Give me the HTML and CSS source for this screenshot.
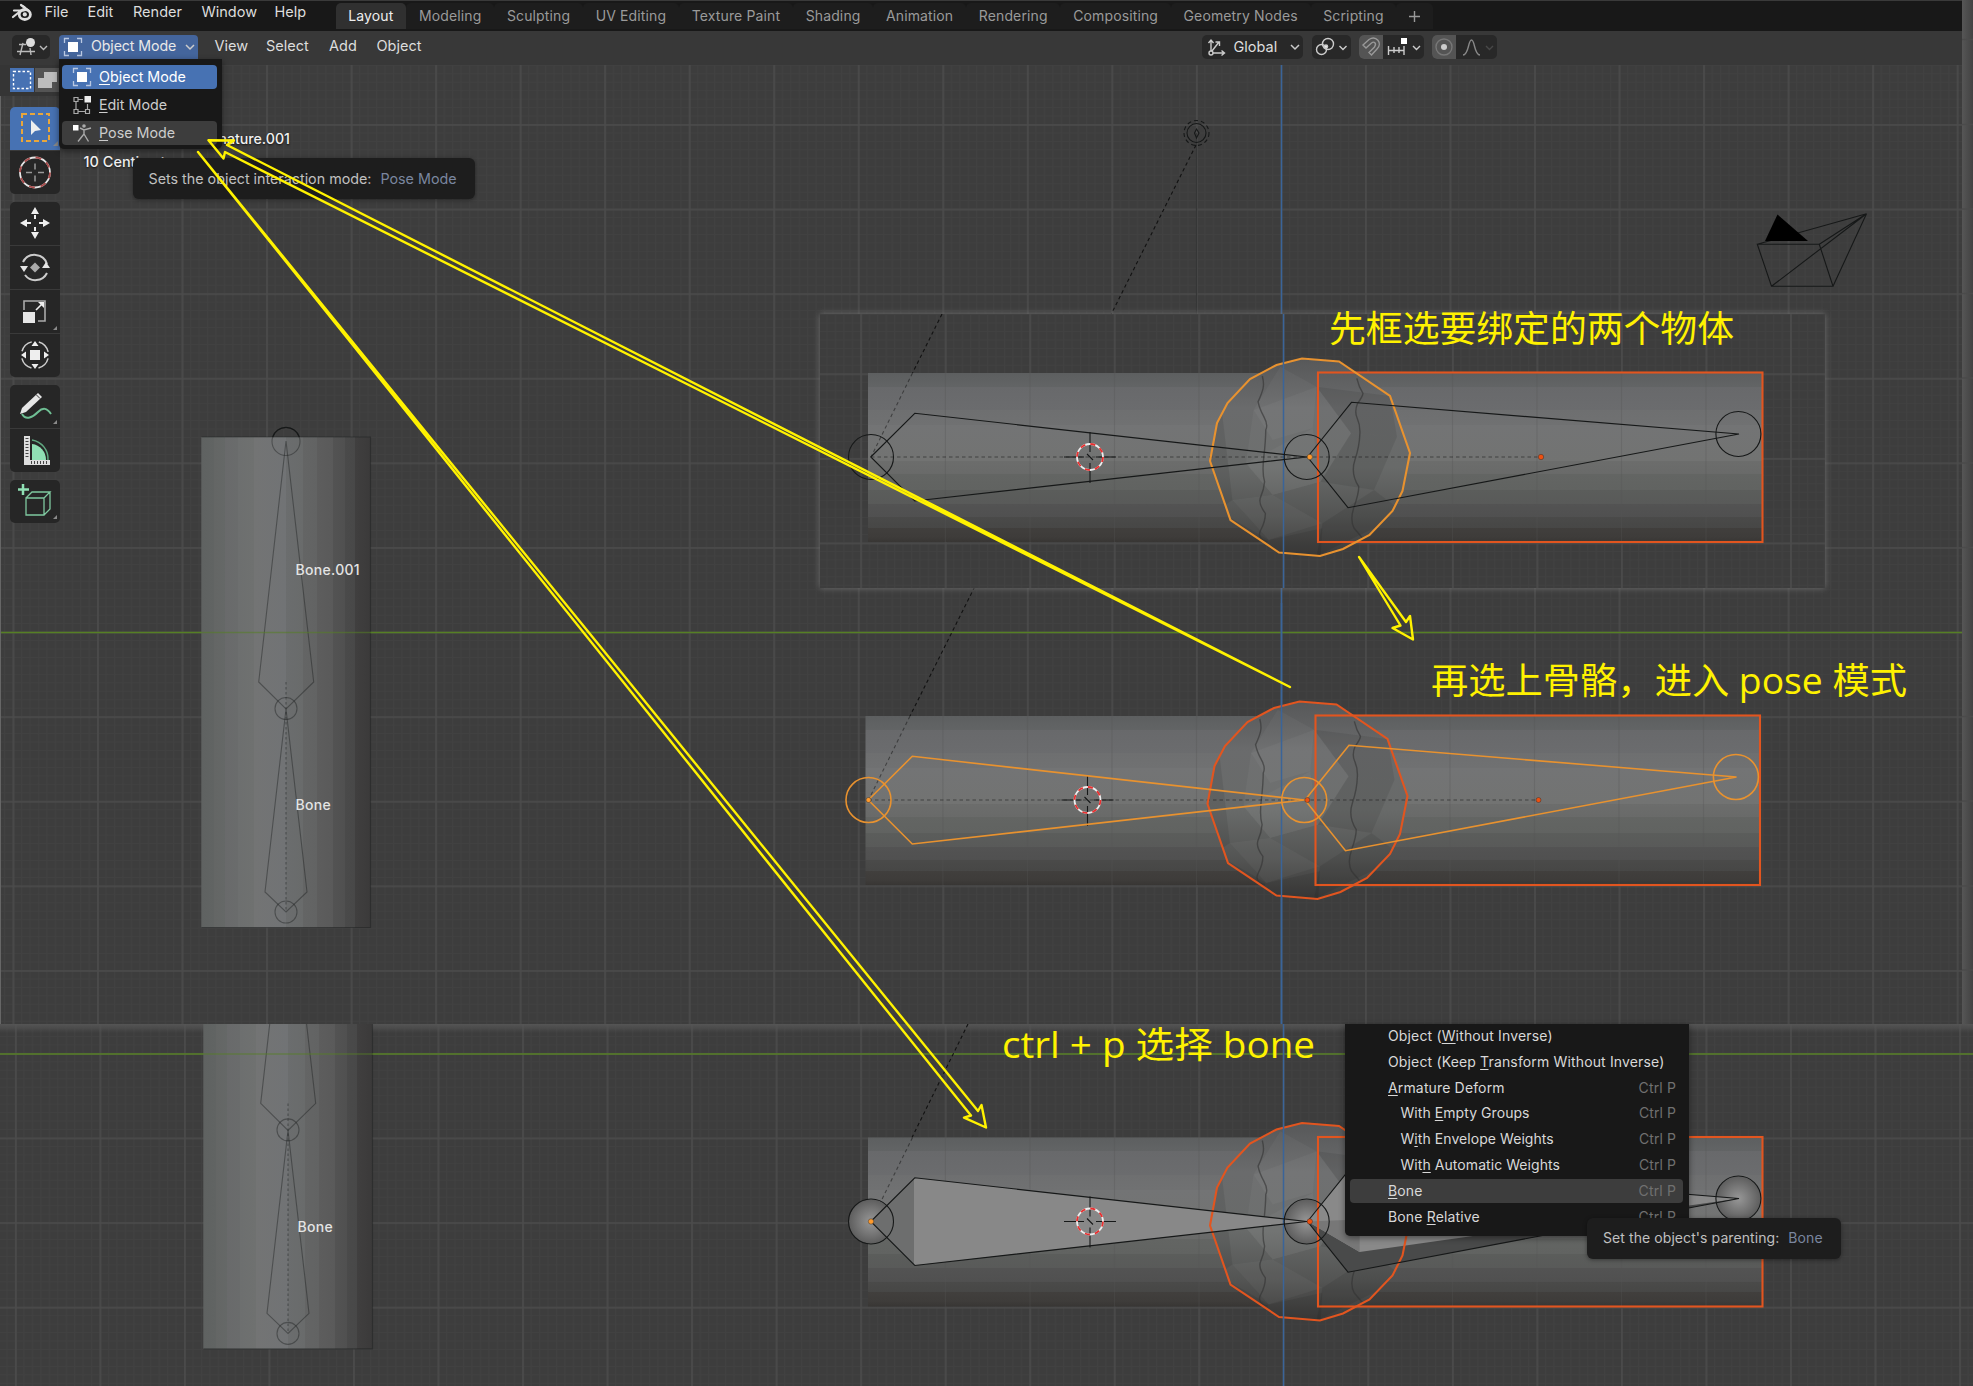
FILE: index.html
```html
<!DOCTYPE html>
<html lang="zh-CN">
<head>
<meta charset="utf-8">
<title>Blender</title>
<link rel="stylesheet" href="styles.css">
</head>
<body>
<div class="app">
<svg class="scene" width="1973" height="1386" viewBox="0 0 1973 1386">
  <defs>
    <pattern id="minor" width="8.453" height="8.46" patternUnits="userSpaceOnUse"><path class="grid-minor" d="M0 .5H8.5M.5 0V8.5"/></pattern>
    <pattern id="major" width="84.53" height="84.6" patternUnits="userSpaceOnUse"><path class="grid-major" d="M0 1H84.6M1 0V84.6"/></pattern>
    <linearGradient id="tube" x1="0" y1="0" x2="0" y2="1">
      <stop offset="0" stop-color="#5d5f60"/><stop offset=".08" stop-color="#626465"/><stop offset=".08" stop-color="#68696b"/><stop offset=".22" stop-color="#6b6c6e"/><stop offset=".22" stop-color="#6e6f70"/><stop offset=".31" stop-color="#707172"/><stop offset=".31" stop-color="#737475"/><stop offset=".52" stop-color="#727372"/><stop offset=".52" stop-color="#6c6d6c"/><stop offset=".6" stop-color="#696a69"/><stop offset=".6" stop-color="#636563"/><stop offset=".69" stop-color="#616361"/><stop offset=".69" stop-color="#5b5d5b"/><stop offset=".775" stop-color="#595a59"/><stop offset=".775" stop-color="#535353"/><stop offset=".855" stop-color="#505050"/><stop offset=".855" stop-color="#4a4a49"/><stop offset=".915" stop-color="#474746"/><stop offset=".915" stop-color="#413f3d"/><stop offset=".97" stop-color="#3e3c3a"/><stop offset="1" stop-color="#383634"/>
    </linearGradient>
    <linearGradient id="post">
      <stop offset="0" stop-color="#5f6261"/><stop offset=".075" stop-color="#616463"/><stop offset=".075" stop-color="#646665"/><stop offset=".14" stop-color="#656867"/><stop offset=".14" stop-color="#696a6b"/><stop offset=".22" stop-color="#6a6c6c"/><stop offset=".22" stop-color="#6d6f6f"/><stop offset=".31" stop-color="#6f7170"/><stop offset=".31" stop-color="#737474"/><stop offset=".5" stop-color="#717375"/><stop offset=".5" stop-color="#6b6d6e"/><stop offset=".6" stop-color="#696b6b"/><stop offset=".6" stop-color="#646565"/><stop offset=".685" stop-color="#626363"/><stop offset=".685" stop-color="#5d5d5d"/><stop offset=".78" stop-color="#5a5a5a"/><stop offset=".78" stop-color="#535353"/><stop offset=".85" stop-color="#505050"/><stop offset=".85" stop-color="#4a4a4a"/><stop offset=".91" stop-color="#484848"/><stop offset=".91" stop-color="#403f3f"/><stop offset="1" stop-color="#3b3a3a"/>
    </linearGradient>
    <linearGradient id="ball" x1="0" y1="0" x2="0" y2="1">
      <stop offset="0" stop-color="#575859"/><stop offset=".25" stop-color="#6a6b6c"/><stop offset=".55" stop-color="#686a69"/><stop offset=".8" stop-color="#535453"/><stop offset="1" stop-color="#3c3b3a"/>
    </linearGradient>
    <radialGradient id="joint"><stop offset="0" stop-color="#979797"/><stop offset="1" stop-color="#5e5e5e"/></radialGradient>
    <linearGradient id="glow" x1="0" y1="0" x2="0" y2="1"><stop offset="0" stop-color="#555"/><stop offset="1" stop-color="#555" stop-opacity="0"/></linearGradient>
    <linearGradient id="side"><stop offset="0" stop-color="#565656"/><stop offset="1" stop-color="#424242"/></linearGradient>
    <filter id="halo" x="-5%" y="-10%" width="110%" height="120%"><feGaussianBlur stdDeviation="3"/></filter>
    <clipPath id="lower"><rect y="1024" width="1973" height="362"/></clipPath>
    <clipPath id="ballclip"><path d="M1210 461L1217 423 1227.500 403 1250 379 1276.500 365 1302 358.500 1339 361.500 1390 396 1410 453 1402.500 491 1392.500 511 1369.500 535 1343 549 1320 556 1279 552.500 1230.500 520Z"/></clipPath>

    <g id="rig-body">
      <rect x="868" y="373" width="450" height="169" fill="url(#tube)"/>
      <rect x="1318" y="373" width="444" height="169" fill="url(#tube)"/>
      <path class="through" d="M945.400 373V542M1030 373V542M1114.500 373V542M1199 373V542M1452.500 373V542M1537 373V542M1621.500 373V542M1706 373V542"/>
      <path d="M1210 461L1217 423 1227.500 403 1250 379 1276.500 365 1302 358.500 1339 361.500 1390 396 1410 453 1402.500 491 1392.500 511 1369.500 535 1343 549 1320 556 1279 552.500 1230.500 520Z" fill="url(#ball)"/>
      <g clip-path="url(#ballclip)"><g transform="translate(800 300) scale(.3827 .3333)">
        <path class="lit" d="M1255 200L1350 260 1440 400 1360 545 1235 585 1165 490 1185 330Z"/>
        <path class="lit" d="M1350 260L1340 385 1235 420 1185 330Z"/>
        <path class="lit" d="M1165 490L1235 585 1360 545 1340 385Z"/>
        <path class="dim" d="M1350 260L1542 288 1560 410 1440 400Z"/>
        <path class="dim" d="M1440 400L1560 410 1500 570 1360 545Z"/>
        <path class="lit" d="M1130 600L1235 585 1365 670 1225 720Z"/>
        <path class="dim" d="M1500 570L1365 670 1350 768 1580 640Z"/>
        <path class="dim" d="M1120 650L1225 720 1365 685 1360 780 1240 770Z"/>
        <path class="dim" d="M1100 310L1130 600 1080 640 1060 400Z"/>
        <path class="seam" d="M1208 228Q1213 250 1210 265T1197 305Q1200 325 1212 350T1217 390Q1217 420 1212 470T1214 545Q1212 570 1204 590T1216 640Q1216 665 1204 690T1222 725"/>
        <path class="seam" d="M1455 235Q1460 260 1471 280Q1470 290 1457 310Q1448 335 1456 355T1463 400Q1462 440 1450 480T1460 560Q1460 580 1448 620T1448 685L1470 715"/>
      </g></g>
      <path class="dash faint" d="M871 457H1541M912.500 373L871 457"/>
    </g>
    <path id="ball-line" d="M1210 461L1217 423 1227.500 403 1250 379 1276.500 365 1302 358.500 1339 361.500 1390 396 1410 453 1402.500 491 1392.500 511 1369.500 535 1343 549 1320 556 1279 552.500 1230.500 520Z"/>
    <rect id="box-line" x="1318" y="372.500" width="444.500" height="169.500"/>
    <g id="bones">
      <path d="M870.800 457L914.800 413.300 1307 457 914.800 501Z"/>
      <path d="M1307.500 457L1351.500 402.300 1739 434 1348 507.700Z"/>
      <circle cx="871" cy="457" r="22.500"/><circle cx="1306.700" cy="457" r="22.500"/><circle cx="1738.400" cy="434" r="22.500"/>
    </g>
    <g id="cursor3d">
      <path class="thin" d="M1090 432v20M1090 463v20M1064 457h20M1096 457h20M1087 454l6 6"/>
      <circle cx="1090" cy="457" r="13" class="cur-w"/><circle cx="1090" cy="457" r="13" class="cur-r"/>
    </g>
    <g id="upright">
      <rect x="201.300" y="437" width="169" height="490.500" fill="url(#post)"/>
      <path class="thin soft" d="M201.500 437H370.500V927.500H201.500M286 441L258.700 682 286 709 313.700 682ZM286 709L265 892 286 912 307 892Z"/>
      <circle class="thin soft" cx="286" cy="441.500" r="14"/><circle class="thin soft" cx="286" cy="708.500" r="11"/><circle class="thin soft" cx="286" cy="912" r="11"/>
      <path class="thin soft" stroke-dasharray="2.500 2.500" d="M286 682V912"/>
    </g>
  </defs>

  <rect width="1973" height="1386" fill="#3d3d3d"/>
  <g transform="translate(12.500 124)"><rect x="-13" y="-125" width="1975" height="1025" fill="url(#minor)"/><rect x="-13" y="-125" width="1975" height="1025" fill="url(#major)"/></g>
  <path class="green" d="M0 632.500H1962"/>
  <path class="blue" d="M1281.500 65V1024"/>
  <path class="dash" d="M1196 145L910 716"/>
  <path class="thin soft" d="M1196.500 133V314"/>
  <g class="thin"><circle cx="1196.500" cy="133" r="9.500"/><circle cx="1196.500" cy="133" r="12.500" stroke-dasharray="4 3"/><path d="M1196.500 129l2.500 4-2.500 5-2-5Z"/>
    <path d="M1757.300 244.300H1819.300L1833 286.300H1771.500ZM1866.500 213.700L1757.300 244.300M1866.500 213.700L1819.300 244.300M1866.500 213.700L1833 286.300M1866.500 213.700L1771.500 286.300"/></g>
  <path d="M1777.500 214.500L1765 241H1808Z"/>
  <use href="#upright"/>
  <path class="thin" d="M272.700 437A14 14 0 0 1 299.300 437"/>
  <path class="green see" d="M201 632.500H371"/>

  <g transform="translate(-2.500 343)"><use href="#rig-body"/><use href="#cursor3d"/><use href="#ball-line" class="red"/><use href="#box-line" class="red"/><path class="blue" d="M1284 260V681"/><use href="#bones" class="orange"/><circle cx="871" cy="457" r="2.500" class="dot-o"/><circle cx="1309.800" cy="457" r="2.500" class="dot-r"/><circle cx="1541" cy="457" r="2.500" class="dot-r"/></g>

  <rect x="820" y="314" width="1005" height="274" fill="#707070" filter="url(#halo)"/>
  <svg x="820" y="314" width="1005" height="274" viewBox="820 314 1005 274">
    <rect x="820" y="314" width="1005" height="274" fill="#3d3d3d"/>
    <g transform="translate(14.900 119.500)"><rect x="800" y="190" width="1012" height="280" fill="url(#minor)"/><rect x="800" y="190" width="1012" height="280" fill="url(#major)"/></g>
    <path class="dash" d="M942 314L912.500 373"/>
    <use href="#rig-body"/><use href="#cursor3d"/><use href="#box-line" class="red"/><use href="#ball-line" class="orange thick"/><path class="blue" d="M1283.500 314V588"/><use href="#bones" class="thin"/>
    <circle cx="1309.800" cy="457" r="2.700" class="dot-o"/><circle cx="1541" cy="457" r="2.700" class="dot-r"/>
  </svg>

  <rect x="1962" y="0" width="11" height="1024" fill="url(#side)"/>
  <path class="grid-major" d="M1962 39.500h11M1962 124.500h11M1962 209h11M1962 293.500h11M1962 378h11M1962 463h11M1962 547.500h11M1962 716.500h11M1962 801h11M1962 886h11M1962 970h11"/>
  <path class="edge" d="M.5 0V1024"/>

  <g clip-path="url(#lower)">
    <rect y="1024" width="1973" height="362" fill="#3d3d3d"/>
    <g transform="translate(14.900 122.300)"><rect x="-15" y="901" width="1974" height="363" fill="url(#minor)"/><rect x="-15" y="901" width="1974" height="363" fill="url(#major)"/></g>
    <rect y="1024" width="1973" height="9" fill="url(#glow)"/>
    <path class="green" d="M0 1054H1973"/>
    <path class="dash" d="M968 1024L912 1137.500"/>
    <use href="#upright" transform="translate(2 421.400)"/><path class="green see" d="M203 1054H373"/>
    <g transform="translate(0 764.500)">
      <use href="#rig-body"/>
      <circle cx="871" cy="457" r="22" fill="url(#joint)"/><circle cx="1306.700" cy="457" r="22" fill="url(#joint)"/><circle cx="1738.400" cy="434" r="22" fill="url(#joint)"/>
      <path d="M871 457L914.800 413.300V501Z" fill="#6d6e6e"/><path d="M914 413.300L1307 457 914 501Z" fill="#888"/>
      <path d="M1307.500 457L1348 507.700 1739 434Z" fill="#494a4a"/><path d="M1307.500 457L1359.600 487.500 1739 434 1351.500 402.300Z" fill="#898989"/><path d="M1307.500 457L1359.600 487.500V455Z" fill="#777"/>
      <use href="#cursor3d"/><use href="#ball-line" class="red"/><use href="#box-line" class="red"/><path class="blue" d="M1283.500 250V630"/><use href="#bones" class="thin"/>
      <circle cx="871" cy="457" r="2.700" class="dot-o"/><circle cx="1309.800" cy="457" r="2.700" class="dot-r"/>
    </g>
  </g>
  <g class="bone-name"><text x="295.500" y="574.500">Bone.001</text><text x="295.500" y="810">Bone</text><text x="297.500" y="1231.500">Bone</text></g>
</svg>

<div class="topbar">
  <svg class="logo" width="22" height="20" viewBox="0 0 22 20"><path d="M12.500 3.500L18 8M3 7.500H13M2 14L9.500 8" stroke="#ddd" stroke-width="2.200" stroke-linecap="round"/><path d="M10 2L14 5" stroke="#ddd" stroke-width="2.200" stroke-linecap="round"/><ellipse cx="13.800" cy="11.500" rx="5.600" ry="5" fill="none" stroke="#ddd" stroke-width="2.800"/><circle cx="13.800" cy="11.400" r="2.100" fill="#ddd"/></svg>
  <nav class="menus"><span>File</span><span>Edit</span><span>Render</span><span>Window</span><span>Help</span></nav>
  <nav class="tabs"><span class="active">Layout</span><span>Modeling</span><span>Sculpting</span><span>UV Editing</span><span>Texture Paint</span><span>Shading</span><span>Animation</span><span>Rendering</span><span>Compositing</span><span>Geometry Nodes</span><span>Scripting</span><span class="add"><svg width="11" height="11" viewBox="0 0 11 11"><path d="M5.500 0V11M0 5.500H11" stroke="#999" stroke-width="1.400"/></svg></span></nav>
</div>
<div class="header">
  <button class="btn editor"><svg width="38" height="24" viewBox="0 0 38 24" fill="none" stroke="#bbb" stroke-width="1.400"><path d="M7 9.500H14M5 16.500H23M11 8L8 20M18 13L19 20"/><circle cx="18.500" cy="7.500" r="4.500" fill="#ddd" stroke="none"/><path d="M28 11l3.500 3.500L35 11"/></svg></button>
  <button class="btn mode"><svg width="20" height="20" viewBox="0 0 20 20"><use href="#i-object"/></svg><span>Object Mode</span><svg width="10" height="8" viewBox="0 0 10 8"><path d="M1 2l4 4 4-4" class="chev"/></svg></button>
  <nav class="hmenus"><span>View</span><span>Select</span><span>Add</span><span>Object</span></nav>
  <div class="tools">
    <button class="btn global"><svg width="20" height="20" viewBox="0 0 20 20" class="ln"><path d="M4 16V3M1.500 6L4 3l2.500 3M4 16H17M14.500 13.500L17.500 16l-3 2.500M5 14L12 5M8.500 5H12.500V9"/><circle cx="4" cy="16" r="2" fill="#282828"/></svg><span>Global</span><svg width="10" height="8" viewBox="0 0 10 8"><path d="M1 2l4 4 4-4" class="chev"/></svg></button>
    <button class="btn pivot"><svg width="39" height="24" viewBox="0 0 39 24" class="ln"><circle cx="9.500" cy="14.500" r="5"/><circle cx="16" cy="9" r="5.500"/><circle cx="14" cy="11.500" r="1.600" fill="#eee"/><path d="M27.500 11l3.500 3.500L34.500 11"/></svg></button>
    <button class="btn pair snap"><svg width="65" height="24" viewBox="0 0 65 24" class="ln"><path d="M0 0H24V24H0Z" fill="#545454" stroke="none"/><g stroke="#999"><path d="M4 10L10 4.500C17 0 24 8 18 14L12.500 20 10 17.500 15.500 12C18 8 15 6 12.500 8L7 13Z"/></g><path d="M29.500 11V20M35 12V18M40 12V18M45 11V20M29.500 15.500H45"/><path d="M42 3h6v6h-6Z" fill="#fff" stroke="none"/><path d="M54 11l3.500 3.500L61 11"/></svg></button>
    <button class="btn pair prop"><svg width="65" height="24" viewBox="0 0 65 24" class="ln"><path d="M0 0H24V24H0Z" fill="#545454" stroke="none"/><circle cx="12" cy="12" r="8" stroke="#777"/><circle cx="12" cy="12" r="3" fill="#ccc" stroke="none"/><path d="M31 20C37 20 36 5 39.500 5S42 20 48 20" stroke="#888"/><path d="M54 11l3.500 3.500L61 11" stroke="#484848"/></svg></button>
  </div>
</div>
<div class="toolbar">
  <div class="selmodes"><svg width="49" height="24" viewBox="0 0 49 24"><path d="M0 0H24V24H0Z" fill="#4772b3"/><path d="M25 0H49V24H25Z" fill="#545454"/><rect x="3.500" y="3.500" width="17" height="17" fill="none" stroke="#fff" stroke-width="1.400" stroke-dasharray="2.500 2"/><path d="M34 4H47V14H42V20H28V10H34Z" fill="#bdbdbd"/></svg></div>
  <div class="group">
    <div class="tool on"><svg viewBox="0 0 50 43"><rect x="12" y="7" width="27" height="27" fill="none" stroke="#e9a63b" stroke-width="2" stroke-dasharray="5 3"/><path d="M21 13L31 23 25 24 21 28Z" fill="#eee"/><path class="corner" d="M48 34V39H43Z"/></svg></div>
    <div class="tool"><svg viewBox="0 0 50 43"><circle cx="25" cy="21.500" r="15" fill="none" stroke="#e6e6e6" stroke-width="1.800"/><circle cx="25" cy="21.500" r="15" fill="none" stroke="#a84a4a" stroke-width="1.800" stroke-dasharray="5.900 5.900"/><path d="M25 12.500v6M25 24.500v6M16 21.500h6M28 21.500h6" stroke="#999" stroke-width="1.500"/></svg></div>
  </div>
  <div class="group">
    <div class="tool"><svg viewBox="0 0 50 43"><path d="M25 5l4 7h-8ZM25 37l4-7h-8ZM10 21l7-4v8ZM40 21l-7-4v8Z" fill="#eee"/><path d="M25 13v4M25 25v4M17 21h4M29 21h4" stroke="#eee" stroke-width="2"/></svg></div>
    <div class="tool"><svg viewBox="0 0 50 43"><path d="M13 16A13 13 0 0 1 37 18M37 27A13 13 0 0 1 15 29" fill="none" stroke="#ccc" stroke-width="2"/><path d="M25 16.500l5 5-5 5-5-5Z" fill="#aaa"/><path d="M10 20h8l-4 6ZM32 22h8l-4-6Z" fill="#e6e6e6"/></svg></div>
    <div class="tool"><svg viewBox="0 0 50 43"><path d="M14 20V11H35V31H28" fill="none" stroke="#aaa" stroke-width="1.600"/><path d="M13 22H25V33H13Z" fill="#e6e6e6"/><path d="M26 20l6-6" stroke="#eee" stroke-width="1.600"/><path d="M34 12v6l-6-6Z" fill="#eee"/><path class="corner" d="M47 36V40H43Z"/></svg></div>
    <div class="tool"><svg viewBox="0 0 50 43"><circle cx="25" cy="21" r="13.500" fill="none" stroke="#ccc" stroke-width="1.500" stroke-dasharray="14 7.200" stroke-dashoffset="-3.500"/><path d="M20 16h10v10H20ZM25 7l3.500 5h-7ZM25 35l3.500-5h-7ZM11 21l5-3.500v7ZM39 21l-5-3.500v7Z" fill="#eee"/></svg></div>
  </div>
  <div class="group">
    <div class="tool"><svg viewBox="0 0 50 43"><path d="M12 29C16 36 23 32 28 27S37 23 41 29" fill="none" stroke="#6fbf94" stroke-width="2"/><path d="M10 29l2-6L28 8l4 4L16 27Z" fill="#e6e6e6"/><path d="M26 9.500l4 4" stroke="#333"/><path class="corner" d="M47 35V39H43Z"/></svg></div>
    <div class="tool"><svg viewBox="0 0 50 43"><path d="M22 15A16 16 0 0 1 36 31H22Z" fill="#8fe0b4"/><path d="M22 11A19 19 0 0 1 38 31" fill="none" stroke="#5fa880" stroke-width="1.500"/><path d="M14 7h6V31H40V36H14Z" fill="#ddd"/><path d="M17 9V30M21 33.500H39" stroke="#444" stroke-width="3" stroke-dasharray="1 2"/></svg></div>
  </div>
  <div class="group">
    <div class="tool"><svg viewBox="0 0 50 43" fill="none" stroke="#7fc9a0" stroke-width="1.300"><path d="M16 18H34V35H16ZM16 18L22 12H40L34 18M40 12V29L34 35"/><path d="M13 4v11M8 9.500H19" stroke="#8fe0b4" stroke-width="2.500"/><path class="corner" stroke="none" d="M47 35V39H43Z"/></svg></div>
  </div>
</div>

<div class="view-info"><span>Armature.001</span></div>
<div class="view-scale">10 Centimeters</div>

<div class="tooltip tip-mode"><span>Sets the object interaction mode:</span><b>Pose Mode</b></div>
<div class="menu mode-menu">
  <div class="mi sel"><svg width="20" height="20" viewBox="0 0 20 20"><g id="i-object"><path d="M1.500 6V1.500H6M14 1.500H18.500V6M18.500 14V18.500H14M6 18.500H1.500V14" fill="none" stroke="#b9c8e2" stroke-width="1.300"/><path d="M5 5H15V15H5Z" fill="#fff"/></g></svg><span><u>O</u>bject Mode</span></div>
  <div class="mi"><svg width="20" height="20" viewBox="0 0 20 20" fill="none" stroke="#aaa" stroke-width="1.200"><path d="M2 2.500h4v4H2ZM2 14.500h4v4H2ZM13.500 14.500h4v4h-4ZM4 6.500v8M6 16.500h7.500M6 4.500h5M15.500 9v5.500"/><path d="M12.500 1h6.500v6.500h-6.500Z" fill="#eee" stroke="none"/></svg><span><u>E</u>dit Mode</span></div>
  <div class="mi hov"><svg width="20" height="20" viewBox="0 0 20 20" fill="none" stroke="#aaa" stroke-width="1.400"><path d="M1 2H6.500V7.500H1Z" fill="#fff" stroke="none"/><circle cx="12" cy="3" r="1.800" fill="#aaa" stroke="none"/><path d="M8 5L12 7 19 5M12 7V11L6 18.500M12 11L16.500 18.500"/></svg><span><u>P</u>ose Mode</span></div>
</div>

<div class="menu parent-menu">
  <div class="pi"><span>Object (<u>W</u>ithout Inverse)</span></div>
  <div class="pi"><span>Object (Keep <u>T</u>ransform Without Inverse)</span></div>
  <div class="pi"><span><u>A</u>rmature Deform</span><kbd>Ctrl P</kbd></div>
  <div class="pi in"><span>With <u>E</u>mpty Groups</span><kbd>Ctrl P</kbd></div>
  <div class="pi in"><span>W<u>i</u>th Envelope Weights</span><kbd>Ctrl P</kbd></div>
  <div class="pi in"><span>Wit<u>h</u> Automatic Weights</span><kbd>Ctrl P</kbd></div>
  <div class="pi hov"><span><u>B</u>one</span><kbd>Ctrl P</kbd></div>
  <div class="pi"><span>Bone <u>R</u>elative</span><kbd>Ctrl P</kbd></div>
</div>
<div class="tooltip tip-parent"><span>Set the object's parenting:</span><b>Bone</b></div>

<svg class="notes" width="1973" height="1386" viewBox="0 0 1973 1386">
  <g class="arrow">
    <path d="M208.500 140.300L234 140.500 227 145 1290 687 225 152 223.500 158.500Z"/>
    <path d="M198 152L978 1111 981.500 1105 986 1127.500 964 1117.700 971 1115.500Z"/>
    <path d="M1359 557L1406 622 1410 616 1413 639.500 1392.500 628 1400.500 625.500Z"/>
  </g>
  <g class="note">
    <text x="1329" y="342" textLength="405" lengthAdjust="spacingAndGlyphs">先框选要绑定的两个物体</text>
    <text x="1431" y="693.500" textLength="476" lengthAdjust="spacingAndGlyphs">再选上骨骼，进入 pose 模式</text>
    <text x="1002" y="1058" textLength="313" lengthAdjust="spacingAndGlyphs">ctrl + p 选择 bone</text>
  </g>
</svg>
</div>
</body>
</html>
```

FILE: styles.css
```css
* { box-sizing: border-box; }
body { margin: 0; background: #3d3d3d; font: 14.5px Inter, "Noto Sans CJK SC", sans-serif; color: #ddd; }
.app { position: relative; width: 1973px; height: 1386px; overflow: hidden; }
.scene, .notes { position: absolute; left: 0; top: 0; }
.notes { pointer-events: none; }

/* viewport drawing */
.grid-minor { stroke: #414141; stroke-width: 1; fill: none; }
.grid-major { stroke: #4b4b4b; stroke-width: 1.6; fill: none; }
.through { stroke: #555; stroke-width: 1.2; opacity: .3; }
.green { stroke: #567f24; stroke-width: 1.6; }
.see { opacity: .55; }
.blue { stroke: #3a6499; stroke-width: 1.5; fill: none; }
.edge { stroke: #666; }
.thin { fill: none; stroke: #161818; stroke-width: 1.1; }
.soft { opacity: .4; }
.dash { stroke: #111; stroke-width: 1.1; stroke-dasharray: 3.5 3; fill: none; }
.faint { opacity: .5; }
.lit { fill: #fff; opacity: .035; }
.dim { fill: #000; opacity: .08; }
.seam { fill: none; stroke: #333; stroke-width: 1.4; opacity: .6; vector-effect: non-scaling-stroke; }
.orange { fill: none; stroke: #e8922f; stroke-width: 1.6; }
.thick { stroke-width: 2.1; }
.red { fill: none; stroke: #e2551f; stroke-width: 2.1; }
.dot-o { fill: #ff9a2c; stroke: #333; stroke-width: .5; }
.dot-r { fill: #ee5010; stroke: #333; stroke-width: .5; }
.cur-w { fill: none; stroke: #eee; stroke-width: 1.8; }
.cur-r { fill: none; stroke: #e83030; stroke-width: 1.8; stroke-dasharray: 5.1 5.1; }
.bone-name { font: 500 14px Inter, sans-serif; letter-spacing: .3px; fill: #e4e4e4; }
.arrow { fill: none; stroke: #fff200; stroke-width: 2.4; stroke-linejoin: round; }
.note { fill: #fff200; font: 36.8px "Open Sans", "Noto Sans CJK SC", sans-serif; }

/* application bars */
.topbar { position: relative; display: flex; width: 1962px; height: 31px; background: #181818; border-top: 1px solid #3a3a3a; }
.logo { margin: 2px 0 0 11px; flex: none; }
.menus { display: grid; grid-template-columns: 43px 45.5px 68.5px 73px 61px; margin-left: 11.5px; line-height: 22px; }
.menus span { white-space: nowrap; }
.tabs { display: flex; margin-top: 2px; height: 26px; line-height: 25px; color: #9a9a9a; font-size: 14px; letter-spacing: .13px; }
.tabs span { padding: 0 12.75px; background: #1d1d1d; border-radius: 5px 5px 0 0; white-space: nowrap; }
.tabs .active { background: #303030; color: #eee; }
.tabs .add { display: flex; align-items: center; }
.header { position: relative; display: flex; align-items: flex-start; width: 1962px; height: 34px; padding: 4px 0 0 12px; background: #383838; }
.btn { display: flex; align-items: center; height: 24px; padding: 0; border: 0; border-radius: 5px; background: #282828; color: #ddd; font: inherit; overflow: hidden; white-space: nowrap; }
.editor { width: 38px; }
.mode { width: 139px; margin-left: 9px; padding: 0 3px 0 4px; background: #44659c; color: #e8e8e8; border-radius: 4px 4px 0 0; }
.mode span { margin-left: 8px; flex: 1; text-align: left; font-size: 14.2px; line-height: 22px; padding-bottom: 2px; letter-spacing: -.1px; }
.chev { fill: none; stroke: #ccc; stroke-width: 1.5; }
.ln { fill: none; stroke: #ccc; stroke-width: 1.4; }
.hmenus { display: grid; grid-template-columns: 51.5px 63px 47.5px 60px; margin-left: 16.5px; line-height: 22px; }
.tools { display: flex; margin-left: 765px; }
.global { width: 101px; padding: 0 3px 0 5px; }
.global span { margin-left: 7px; flex: 1; text-align: left; padding-bottom: 1px; }
.pivot { width: 39px; margin-left: 9px; }
.pair { width: 65px; margin-left: 8px; }
.toolbar { position: relative; width: 60px; display: flex; flex-direction: column; gap: 8px; }
.selmodes { height: 31px; padding: 3px 0 0 10px; margin-bottom: 3px; background: #353535; }
.group { margin-left: 10px; width: 50px; display: grid; gap: 1px; border-radius: 5px; overflow: hidden; background: #3a3a3a; }
.tool { height: 43px; background: #262626; }
.tool svg { display: block; width: 50px; height: 43px; }
.tool.on { background: #4772b3; }
.corner { fill: #8a8a8a; }

/* floating layers */
.view-info { position: absolute; left: 84px; top: 130px; width: 206px; text-align: right; font-weight: 500; font-size: 14.2px; color: #f0f0f0; text-shadow: 0 1px 2px #111; }
.view-scale { position: absolute; left: 83.5px; top: 153px; font-weight: 500; color: #f0f0f0; text-shadow: 0 1px 2px #111; }
.menu { position: absolute; background: #181818; box-shadow: 0 2px 6px #0007; }
.mode-menu { left: 59px; top: 59px; width: 163px; height: 90px; padding: 6px 5px 4px 3px; border-radius: 0 0 5px 5px; }
.mi { display: flex; align-items: center; height: 24px; margin-bottom: 4px; padding-left: 10px; gap: 7px; border-radius: 4px; color: #ccc; font-size: 14.3px; }
.mi span { padding-bottom: 2px; }
.sel { background: #4772b3; color: #fff; }
.hov { background: #3d3d3d; }
u { text-underline-offset: 2px; text-decoration-thickness: 1px; }
.tooltip { position: absolute; display: flex; align-items: center; padding: 0 0 1px 16px; background: #1d1d1d; border-radius: 6px; color: #c0c0c0; white-space: nowrap; box-shadow: 0 1px 4px #0006; }
.tooltip b { font-weight: 400; color: #7a869f; margin-left: 9px; }
.tip-mode { left: 132.5px; top: 158px; width: 342px; height: 41px; font-size: 14.3px; }
.tip-parent { left: 1587px; top: 1217.5px; width: 254px; height: 41px; font-size: 14px; padding-bottom: 2px; letter-spacing: .08px; }
.parent-menu { left: 1345px; top: 1024px; width: 344px; height: 212px; padding: 0 6px 0 5px; border-radius: 0 0 5px 5px; font-size: 14px; letter-spacing: .15px; }
.pi { display: flex; justify-content: space-between; align-items: center; height: 24px; margin-bottom: 1.83px; padding: 0 7px 1px 38px; border-radius: 4px; color: #d8d8d8; white-space: nowrap; }
.pi.in { padding-left: 50.5px; letter-spacing: .06px; }
kbd { font: inherit; color: #707070; }
```
